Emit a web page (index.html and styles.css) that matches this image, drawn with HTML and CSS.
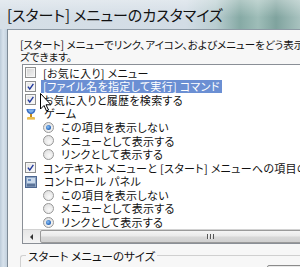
FILE: index.html
```html
<!DOCTYPE html>
<html lang="ja">
<head>
<meta charset="utf-8">
<link rel="stylesheet" href="styles.css">
</head>
<body>
<div class="window">
  <div class="titlebar"><span class="title">[スタート] メニューのカスタマイズ</span></div>
  <div class="frame">
    <div class="frame-left"></div>
    <div class="content">
      <div class="desc">
        <div class="line">[スタート] メニューでリンク、アイコン、およびメニューをどう表示させ、どう動作させるかをカスタマイ</div>
        <div class="line">ズできます。</div>
      </div>
      <div class="listbox">
        <div class="rows">
          <div class="row"><span class="cb"></span><span class="lbl">[お気に入り] メニュー</span></div>
          <div class="row"><span class="cb on"><svg viewBox="0 0 11 11"><path d="M2.3 5.6 L4.6 8.6 L9 2.2"/></svg></span><span class="lbl sel">[ファイル名を指定して実行] コマンド</span></div>
          <div class="row"><span class="cb on"><svg viewBox="0 0 11 11"><path d="M2.3 5.6 L4.6 8.6 L9 2.2"/></svg></span><span class="lbl">お気に入りと履歴を検索する</span></div>
          <div class="row"><span class="ico"><svg viewBox="0 0 12 12"><path d="M1.5 1 H10.5 C10.5 4 8.5 6 6 6 C3.5 6 1.5 4 1.5 1Z" fill="#3b6fc4"/><path d="M3 1.6 H9 C8.8 3.6 7.5 4.8 6 4.8 C4.5 4.8 3.2 3.6 3 1.6Z" fill="#7fb0ea"/><rect x="5" y="6" width="2" height="3" fill="#c48a1c"/><path d="M2.5 9 H9.5 L10 11.5 H2 Z" fill="#e0a72a"/><path d="M3 9.6 H9 L9.2 10.4 H2.8Z" fill="#f6d56a"/></svg></span><span class="lbl">ゲーム</span></div>
          <div class="row sub"><span class="rd on"></span><span class="lbl">この項目を表示しない</span></div>
          <div class="row sub"><span class="rd"></span><span class="lbl">メニューとして表示する</span></div>
          <div class="row sub"><span class="rd"></span><span class="lbl">リンクとして表示する</span></div>
          <div class="row"><span class="cb on"><svg viewBox="0 0 11 11"><path d="M2.3 5.6 L4.6 8.6 L9 2.2"/></svg></span><span class="lbl">コンテキスト メニューと [スタート] メニューへの項目のドラッグ アンド ドロップを有効にする</span></div>
          <div class="row"><span class="ico"><svg viewBox="0 0 12 12"><rect x="0.5" y="0.5" width="11" height="11" fill="#8fa6c4" stroke="#4d6690"/><rect x="2" y="2" width="8" height="5" fill="#c9d8ea"/><rect x="2" y="8" width="8" height="2.5" fill="#5b7398"/><rect x="3" y="3" width="3" height="2" fill="#6b8fc0"/></svg></span><span class="lbl">コントロール パネル</span></div>
          <div class="row sub"><span class="rd"></span><span class="lbl">この項目を表示しない</span></div>
          <div class="row sub"><span class="rd"></span><span class="lbl">メニューとして表示する</span></div>
          <div class="row sub"><span class="rd on"></span><span class="lbl">リンクとして表示する</span></div>
        </div>
        <div class="hscroll">
          <div class="sbtn"><span class="larr"></span></div>
          <div class="thumb"><span class="grip"></span></div>
        </div>
      </div>
      <div class="group">
        <div class="glabel">スタート メニューのサイズ</div>
        <div class="gbtn"></div>
      </div>
    </div>
  </div>
  <svg class="cursor" viewBox="0 0 12 19" width="12" height="19"><path d="M0.5 0.5 V16 L4 12.5 L6.5 18 L8.5 17 L6 11.8 H11 Z" fill="#fff" stroke="#000" stroke-width="1" stroke-linejoin="round"/></svg>
</div>
</body>
</html>
```
FILE: styles.css
```css
html, body {
  margin: 0;
  padding: 0;
}
body {
  width: 300px;
  height: 267px;
  overflow: hidden;
  font-family: "Noto Sans CJK JP", "Noto Sans", sans-serif;
  font-feature-settings: "palt";
  color: #111;
}
.window {
  position: relative;
  width: 300px;
  height: 267px;
  overflow: hidden;
  display: flex;
  flex-direction: column;
  background: #c9d6e2;
}
.titlebar {
  height: 29px;
  flex: none;
  display: flex;
  align-items: center;
  padding-left: 7px;
  background:
    linear-gradient(180deg, rgba(255,255,255,0.35), rgba(255,255,255,0) 60%),
    linear-gradient(90deg, #d6dfe7 0%, #d2dce5 62%, #b9cdd0 72%, #86aaa5 80%, #9ebdb8 86%, #7fa39e 92%, #a8c2bf 100%);
}
.title {
  font-size: 15px;
  line-height: 17px;
  white-space: nowrap;
  color: #111;
  margin-top: -1px;
}
.frame {
  flex: 1;
  display: flex;
  min-height: 0;
}
.frame-left {
  width: 7px;
  flex: none;
  background: linear-gradient(90deg, #bccbd9 0%, #d7e2ec 45%, #c3d1de 100%);
  border-right: 1px solid #7d8a96;
}
.content {
  flex: none;
  width: 420px;
  background: #f7f7f7;
  border-top: 1px solid #8d99a4;
  padding-left: 12px;
  display: flex;
  flex-direction: column;
}
.desc {
  margin-top: 9px;
  font-size: 10.5px;
  line-height: 11.5px;
  white-space: nowrap;
}
.listbox {
  margin-top: 2px;
  margin-left: 2px;
  border: 1px solid #8a8f96;
  background: #fff;
  display: flex;
  flex-direction: column;
}
.rows {
  padding-top: 1px;
}
.row {
  height: 13.6px;
  display: flex;
  align-items: center;
  padding-left: 2px;
  font-size: 11px;
  letter-spacing: 0.3px;
  white-space: nowrap;
}
.row.sub {
  padding-left: 20px;
}
.lbl {
  margin-left: 5px;
  line-height: 12.5px;
  padding: 0 2px;
}
.lbl.sel {
  background: #6b8fd3;
  color: #fff;
}
.cb {
  width: 11px;
  height: 11px;
  box-sizing: border-box;
  border: 1px solid #8e8f8f;
  background: linear-gradient(135deg, #d2d2d2, #f4f4f4);
  box-shadow: inset 0 0 0 1px #f6f6f6;
  flex: none;
  display: flex;
}
.cb.on {
  background: linear-gradient(135deg, #e4e4e4, #fbfbfb);
}
.cb svg {
  width: 9px;
  height: 9px;
}
.cb path {
  fill: none;
  stroke: #22399b;
  stroke-width: 1.7;
}
.ico {
  width: 12px;
  height: 12px;
  flex: none;
  display: flex;
}
.ico svg {
  width: 12px;
  height: 12px;
}
.rd {
  width: 11px;
  height: 11px;
  box-sizing: border-box;
  border-radius: 50%;
  border: 1px solid #979797;
  background: radial-gradient(circle at 60% 65%, #fafafa, #d9d9d9);
  flex: none;
  display: flex;
  align-items: center;
  justify-content: center;
}
.rd.on::after {
  content: "";
  width: 5px;
  height: 5px;
  border-radius: 50%;
  background: radial-gradient(circle at 40% 40%, #8fc4f6, #2f6fc2 60%, #1c4a90);
}
.hscroll {
  height: 13px;
  display: flex;
  border-top: 1px solid #d2d2d2;
  background: linear-gradient(180deg, #e6e6e6, #f4f4f4);
}
.sbtn {
  width: 16px;
  flex: none;
  display: flex;
  align-items: center;
  justify-content: center;
}
.larr {
  width: 0;
  height: 0;
  border-top: 3px solid transparent;
  border-bottom: 3px solid transparent;
  border-right: 3px solid #333;
}
.thumb {
  flex: 1;
  margin: 0 0 0 1px;
  border: 1px solid #9a9a9a;
  border-radius: 2px;
  background: linear-gradient(180deg, #f4f4f4 0%, #e9e9e9 48%, #d8d8d8 52%, #d0d0d0 100%);
  position: relative;
}
.grip {
  position: absolute;
  left: 166px;
  top: 3px;
  width: 7px;
  height: 5px;
  background: repeating-linear-gradient(90deg, #555 0 1px, #eee 1px 2px, transparent 2px 3px);
}
.group {
  margin-top: 11px;
  border: 1px solid #d0d0d0;
  border-right: none;
  border-bottom: none;
  border-radius: 3px 0 0 0;
  height: 40px;
  position: relative;
}
.glabel {
  position: absolute;
  left: 5px;
  top: -6px;
  padding: 0 2px;
  background: #f7f7f7;
  font-size: 11.5px;
  line-height: 12px;
  white-space: nowrap;
}
.gbtn {
  position: absolute;
  left: 246px;
  top: 9px;
  width: 80px;
  height: 20px;
  border: 1px solid #8b8b8b;
  border-radius: 2px;
  background: #eaeaea;
}
.cursor {
  position: absolute;
  left: 40px;
  top: 93px;
}
```
